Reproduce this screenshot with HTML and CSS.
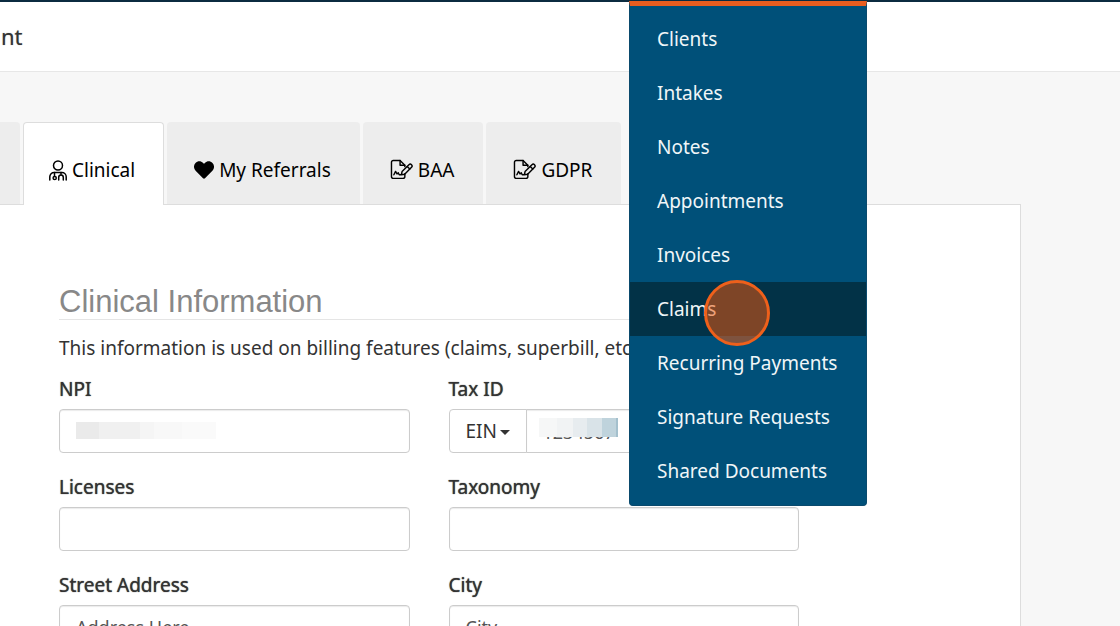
FILE: index.html
```
<!DOCTYPE html>
<html lang="en">
<head>
	<meta charset="UTF-8">
	<meta name="viewport" content="width=device-width, initial-scale=1">
	<title>Account</title>
	<link rel="stylesheet" href="styles.css">
</head>
<body>
	<svg class="sprite" aria-hidden="true">
		<symbol id="icon-sign" viewBox="0 0 24 22">
			<path d="M15.500 15.500V18.500a1.800 1.800 0 0 1-1.800 1.800H3.300a1.800 1.800 0 0 1-1.800-1.800V3.300a1.800 1.800 0 0 1 1.800-1.800H10.500l5 5v1.500"/>
			<path d="M10.500 1.500v5h5"/>
			<path d="M4 16.500l1.800-3.500 1.500 2.700 1.300-1.200 1 2h2.200l.8-3.300 7.200-7.200a1.900 1.900 0 0 1 2.700 2.700l-7.200 7.200-3.500.6"/>
			<path d="M18 7.800l2.700 2.700"/>
		</symbol>
	</svg>
	<div class="topbar"></div>
	<header class="page-header">
		<h1>nt</h1>
	</header>
	<main class="content">
		<nav class="tabs">
			<span class="tab tab-cut"></span>
			<a href="#clinical" class="tab active">
				<svg class="icon icon-md" viewBox="0 0 18 21" aria-hidden="true">
					<circle cx="9" cy="5.500" r="4.500"/>
					<path d="M.8 20v-3.200a4.300 4.300 0 0 1 4.300-4.300h7.800a4.300 4.300 0 0 1 4.300 4.300V20"/>
					<path d="M5.500 12.500v3.800M12 12.500v2.500M9.700 20v-2.600a2.300 2.300 0 0 1 4.600 0V20"/>
					<circle cx="5.700" cy="18" r="1.600"/>
				</svg>
				Clinical
			</a>
			<a href="#referrals" class="tab">
				<svg class="icon icon-heart" viewBox="0 0 20 18" aria-hidden="true">
					<path d="M10 17.700c-.4 0-.7-.2-1-.5L1.600 9.800C-.6 7.500-.5 3.900 1.500 1.900c2.300-2.300 5.500-2.100 7.600 0l.9.9.9-.9c2.100-2.100 5.300-2.300 7.600 0 2 2 2.100 5.600-.1 7.900L11 17.200c-.3.300-.6.500-1 .5z"/>
				</svg>
				My Referrals
			</a>
			<a href="#baa" class="tab">
				<svg class="icon icon-sign" aria-hidden="true"><use href="#icon-sign"/></svg>
				BAA
			</a>
			<a href="#gdpr" class="tab">
				<svg class="icon icon-sign" aria-hidden="true"><use href="#icon-sign"/></svg>
				GDPR
			</a>
		</nav>
		<section class="panel">
			<h2>Clinical Information</h2>
			<p>This information is used on billing features (claims, superbill, etc.)</p>
			<form class="fields">
				<div class="field">
					<label for="npi">NPI</label>
					<div class="masked">
						<input type="text" id="npi">
						<span class="mask mask-npi"></span>
					</div>
				</div>
				<div class="field">
					<label for="tax">Tax ID</label>
					<div class="input-group">
						<div class="type-select">
							<select aria-label="Tax ID type">
								<option>EIN</option>
								<option>SSN</option>
							</select>
							<span class="caret"></span>
						</div>
						<div class="masked">
							<input type="text" id="tax" value="1234567">
							<span class="mask mask-tax"></span>
						</div>
					</div>
				</div>
				<div class="field">
					<label for="licenses">Licenses</label>
					<input type="text" id="licenses">
				</div>
				<div class="field">
					<label for="taxonomy">Taxonomy</label>
					<input type="text" id="taxonomy">
				</div>
				<div class="field">
					<label for="street">Street Address</label>
					<input type="text" id="street" placeholder="Address Here">
				</div>
				<div class="field">
					<label for="city">City</label>
					<input type="text" id="city" placeholder="City">
				</div>
			</form>
		</section>
	</main>
	<!-- open dropdown of the main menu -->
	<ul class="dropdown">
		<li><a href="#clients">Clients</a></li>
		<li><a href="#intakes">Intakes</a></li>
		<li><a href="#notes">Notes</a></li>
		<li><a href="#appointments">Appointments</a></li>
		<li><a href="#invoices">Invoices</a></li>
		<li class="current"><a href="#claims">Claims</a><span class="marker"></span></li>
		<li><a href="#recurring">Recurring Payments</a></li>
		<li><a href="#signature">Signature Requests</a></li>
		<li><a href="#documents">Shared Documents</a></li>
	</ul>
</body>
</html>
```

FILE: styles.css
```
*{
	box-sizing: border-box;
	margin: 0;
	padding: 0;
}
html{
	overflow: hidden;
}
body{
	height: 100vh;
	overflow: hidden;
	background: #f7f7f7;
	color: #333;
	font-family: "Noto Sans", "Open Sans", sans-serif;
	font-size: 19px;
	line-height: 28px;
}
.sprite{
	position: absolute;
	width: 0;
	height: 0;
}
.topbar{
	height: 2px;
	background: #0b2b40;
}
.page-header{
	padding: 20px 1px;
	background: #fff;
	border-bottom: 1px solid #e7e7e7;
}
.page-header h1{
	font-size: 22px;
	font-weight: 400;
	line-height: 29px;
	text-shadow: 0 0 1px #999;
}
.content{
	padding: 50px 99px 0 0;
}

/* tabs */
.tabs{
	display: flex;
	gap: 3px;
}
.tab{
	display: flex;
	align-items: center;
	gap: 5px;
	height: 82px;
	padding: 12px 28px 0 26px;
	border: 1px solid transparent;
	border-bottom: 0;
	border-radius: 4px 4px 0 0;
	background: #ededed;
	color: #000;
	text-decoration: none;
}
.tab-cut{
	width: 20px;
	padding: 0;
	border-radius: 0 4px 0 0;
}
.tab.active{
	height: 83px;
	margin-bottom: -1px;
	padding: 12px 28px 0 25px;
	border-color: #ddd;
	background: #fff;
	z-index: 1;
}
.icon{
	fill: none;
	stroke: #000;
	stroke-width: 1.500;
	stroke-linecap: round;
	stroke-linejoin: round;
}
.icon-md{
	width: 18px;
	height: 21px;
}
.icon-heart{
	width: 20px;
	height: 18px;
	fill: #000;
	stroke: none;
}
.icon-sign{
	width: 23px;
	height: 21px;
}

/* form */
.panel{
	padding: 80px 221px 40px 59px;
	border: 1px solid #ddd;
	border-left: 0;
	background: #fff;
}
.panel h2{
	margin-bottom: 14px;
	border-bottom: 1px solid #e5e5e5;
	color: #888;
	font-family: "Liberation Sans", Arial, sans-serif;
	font-size: 31px;
	font-weight: 400;
	line-height: 34px;
}
.panel p{
	margin-bottom: 13px;
}
.fields{
	display: grid;
	grid-template-columns: 1fr 1fr;
	gap: 20px 39px;
}
.field label{
	display: block;
	margin-bottom: 6px;
	text-shadow: 0 0 1px #333;
}
.field input{
	display: block;
	width: 100%;
	height: 44px;
	padding: 0 16px;
	border: 1px solid #ccc;
	border-radius: 4px;
	background: #fff;
	box-shadow: inset 0 1px 1px rgba(0,0,0,.08);
	color: #555;
	font: inherit;
	font-size: 18px;
}
.field input::placeholder{
	color: #555;
	opacity: 1;
}
.input-group{
	display: flex;
}
.type-select{
	position: relative;
	flex: none;
	width: 78px;
	margin-right: -1px;
}
.type-select select{
	width: 100%;
	height: 44px;
	padding: 0 16px;
	border: 1px solid #ccc;
	border-radius: 4px 0 0 4px;
	appearance: none;
	background: #fff;
	color: #333;
	font: inherit;
}
.caret{
	position: absolute;
	top: 21px;
	right: 17px;
	border: 5px solid transparent;
	border-top-color: #333;
	border-bottom: 0;
	pointer-events: none;
}
.masked{
	position: relative;
	flex: 1;
	min-width: 0;
}
.input-group .masked input{
	border-radius: 0 4px 4px 0;
	line-height: 28px;
	padding-top: 2px;
}
/* hides private numbers */
.mask{
	position: absolute;
}
.mask-npi{
	top: 13px;
	left: 17px;
	width: 140px;
	height: 17px;
	background: linear-gradient(90deg, #eaeaea 0 23px, #f0f0f0 23px 64px, #f5f5f5 64px 78px, #f8f8f8 78px 106px, #fafafa 106px);
}
.mask-tax{
	top: 9px;
	left: 13px;
	width: 79px;
	height: 19px;
	background: linear-gradient(90deg, #f6f7f7 0 18px, #f1f3f4 18px 34px, #e7ecef 34px 48px, #d9e3e8 48px 63px, #bfd3dc 63px 77px, #a4c0cd 77px);
}

/* menu */
.dropdown{
	position: absolute;
	top: 1px;
	left: 629px;
	z-index: 10;
	padding: 6px 0 7px;
	border: 1px solid #0a4a6d;
	border-top: 5px solid #e85d1f;
	border-radius: 0 0 4px 4px;
	background: #005079;
	list-style: none;
}
.dropdown li{
	position: relative;
}
.dropdown a{
	display: block;
	padding: 13px 29px 13px 27px;
	color: #f0f6f8;
	text-decoration: none;
	white-space: nowrap;
}
.dropdown .current{
	z-index: 1;
	background: #023247;
}
.marker{
	position: absolute;
	top: -2px;
	left: 74px;
	width: 66px;
	height: 66px;
	border: 3px solid #ee601b;
	border-radius: 50%;
	background: rgba(238,86,12,.53);
}
```
